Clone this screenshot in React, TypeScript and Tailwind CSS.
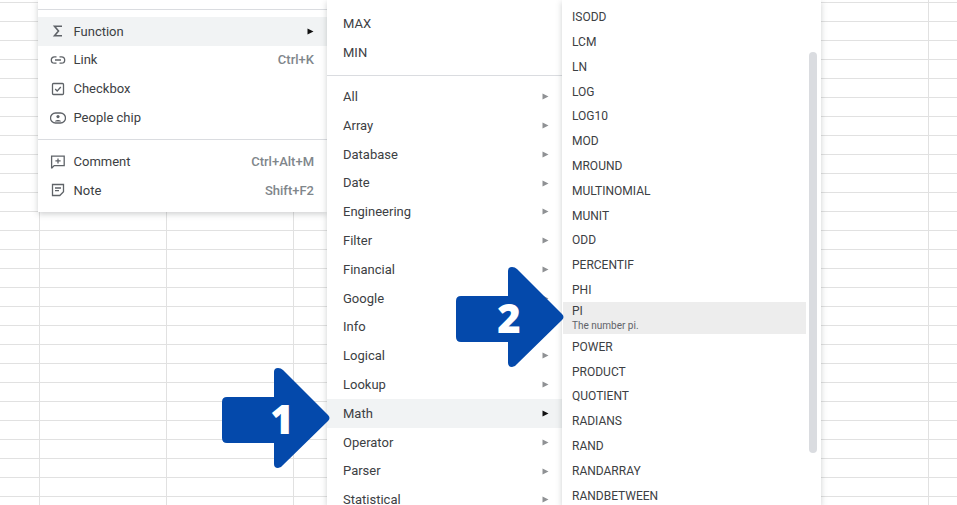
import { ReactNode } from 'react';

const categories = ['All', 'Array', 'Database', 'Date', 'Engineering', 'Filter', 'Financial', 'Google', 'Info', 'Logical', 'Lookup', 'Math', 'Operator', 'Parser', 'Statistical'];
const beforePi = ['ISODD', 'LCM', 'LN', 'LOG', 'LOG10', 'MOD', 'MROUND', 'MULTINOMIAL', 'MUNIT', 'ODD', 'PERCENTIF', 'PHI'];
const afterPi = ['POWER', 'PRODUCT', 'QUOTIENT', 'RADIANS', 'RAND', 'RANDARRAY', 'RANDBETWEEN'];

function Caret({ dark }: { dark?: boolean }) {
  return (
    <svg width="7" height="7" viewBox="0 0 7 7" className="shrink-0">
      <path d="M0.5 0.5 L6.5 3.5 L0.5 6.5 Z" fill={dark ? '#111' : '#8f9194'} />
    </svg>
  );
}

function IconRow({ icon, label, shortcut, active }: { icon: ReactNode; label: string; shortcut?: string; active?: boolean }) {
  return (
    <div className={`flex h-[28.8px] items-center pl-[12px] pr-[13px] ${active ? 'bg-[#f1f3f4]' : ''}`}>
      <span className="flex w-[23.5px] shrink-0 justify-start text-[#5f6368]">{icon}</span>
      <span className="text-[13px] text-[#3c4043]">{label}</span>
      <span className="ml-auto text-[13px] font-medium text-[#80868b]">{shortcut}</span>
      {active && <Caret dark />}
    </div>
  );
}

function Sigma() {
  return (
    <svg width="16" height="16" viewBox="0 0 16 16" fill="none" stroke="currentColor" strokeWidth="1.6">
      <path d="M12 3.2 H4.5 L8.5 8 L4.5 12.8 H12" />
    </svg>
  );
}

function LinkIcon() {
  return (
    <svg width="16" height="16" viewBox="0 0 16 16" fill="none" stroke="currentColor" strokeWidth="1.3">
      <path d="M6.5 4.8 H4.5 a3.2 3.2 0 0 0 0 6.4 H6.5 M9.5 4.8 H11.5 a3.2 3.2 0 0 1 0 6.4 H9.5 M5 8 H11" />
    </svg>
  );
}

function CheckIcon() {
  return (
    <svg width="16" height="16" viewBox="0 0 16 16" fill="none" stroke="currentColor" strokeWidth="1.3">
      <rect x="2.5" y="2.5" width="11" height="11" rx="1" />
      <path d="M5.2 8 L7.2 10 L10.8 6" />
    </svg>
  );
}

function ChipIcon() {
  return (
    <svg width="16" height="16" viewBox="0 0 16 16" fill="none" stroke="currentColor" strokeWidth="1.3">
      <rect x="0.5" y="3" width="15" height="10" rx="5" />
      <circle cx="8" cy="6.6" r="1.6" fill="currentColor" stroke="none" />
      <path d="M4.8 11.4 C5.5 9.4 10.5 9.4 11.2 11.4 Z" fill="currentColor" stroke="none" />
    </svg>
  );
}

function CommentIcon() {
  return (
    <svg width="16" height="16" viewBox="0 0 16 16" fill="none" stroke="currentColor" strokeWidth="1.3">
      <path d="M1.6 14.6 V2.2 H14.2 V11.6 H4.2 L1.6 14.2" />
      <path d="M8 4.4 V9.4 M5.4 6.9 H10.6" />
    </svg>
  );
}

function NoteIcon() {
  return (
    <svg width="16" height="16" viewBox="0 0 16 16" fill="none" stroke="currentColor" strokeWidth="1.3">
      <path d="M2.5 2.5 H13.5 V9.8 L9.8 13.5 H2.5 Z" />
      <path d="M5 6 H11 M5 8.6 H9" />
    </svg>
  );
}

function Arrow({ n, textX }: { n: string; textX: number }) {
  return (
    <svg width="108" height="102" viewBox="0 0 108 102">
      <path
        d="M52 5 Q52 1 56 1 Q59 1 61 3 L106 48 Q109 51 106 54 L61 98 Q59 101 56 101 Q52 101 52 97 L52 76 L5 76 Q0 76 0 71 L0 35 Q0 30 5 30 L52 30 Z"
        fill="#0449ab"
      />
      <text x={textX} y="67" textAnchor="middle" fontFamily="'Open Sans', sans-serif" fontWeight="800" fontSize="40" fill="#fff">
        {n}
      </text>
    </svg>
  );
}

export default function App() {
  return (
    <div className="relative h-[505px] w-[957px] overflow-hidden bg-white bg-[linear-gradient(#e1e1e1_1px,transparent_1px),linear-gradient(90deg,#e1e1e1_1px,transparent_1px)] bg-[size:127px_19px] bg-[position:39px_2px] font-['Roboto',sans-serif]">
      <div className="flex items-start pl-[38px]">
        <div className="z-10 w-[289px] bg-white pb-[7px] shadow-[0_2px_6px_rgba(60,64,67,0.25)]">
          <div className="mt-[9px] mb-[7px] border-t border-[#dadce0]" />
          <IconRow icon={<Sigma />} label="Function" active />
          <IconRow icon={<LinkIcon />} label="Link" shortcut="Ctrl+K" />
          <IconRow icon={<CheckIcon />} label="Checkbox" />
          <IconRow icon={<ChipIcon />} label="People chip" />
          <div className="my-[7px] border-t border-[#dadce0]" />
          <IconRow icon={<CommentIcon />} label="Comment" shortcut="Ctrl+Alt+M" />
          <IconRow icon={<NoteIcon />} label="Note" shortcut="Shift+F2" />
        </div>

        <div className="z-20 h-[505px] w-[235px] overflow-hidden bg-white pt-[9px] shadow-[0_2px_6px_rgba(60,64,67,0.25)]">
          <div className="flex h-[29px] items-center pl-4 text-[13px] text-[#3c4043]">MAX</div>
          <div className="flex h-[29px] items-center pl-4 text-[13px] text-[#3c4043]">MIN</div>
          <div className="mt-[8px] mb-[6.4px] border-t border-[#dadce0]" />
          {categories.map((c) => (
            <div key={c} className={`flex h-[28.8px] items-center justify-between pl-4 pr-[13px] text-[13px] text-[#3c4043] ${c === 'Math' ? 'bg-[#f1f3f4]' : ''}`}>
              <span>{c}</span>
              <Caret dark={c === 'Math'} />
            </div>
          ))}
        </div>

        <div className="relative z-30 h-[505px] w-[259px] overflow-hidden bg-white pt-[4.8px] pl-[1px] shadow-[0_2px_6px_rgba(60,64,67,0.25)]">
          {beforePi.map((f) => (
            <div key={f} className="flex h-[24.8px] w-[243px] items-center pl-[9px] text-[12px] text-[#3c4043]">{f}</div>
          ))}
          <div className="flex h-[32px] w-[243px] flex-col justify-center bg-[#ededed] pb-[1px] pl-[9px] leading-none">
            <span className="text-[12px] text-[#3c4043]">PI</span>
            <span className="mt-[4px] text-[10px] text-[#5f6368]">The number pi.</span>
          </div>
          {afterPi.map((f) => (
            <div key={f} className="flex h-[24.8px] w-[243px] items-center pl-[9px] text-[12px] text-[#3c4043]">{f}</div>
          ))}
          <div className="absolute top-[52px] left-[247px] h-[401px] w-2 rounded-full bg-[#dadce0]" />
        </div>
      </div>

      <div className="absolute top-[367px] left-[222px] z-40">
        <Arrow n="1" textX={60} />
      </div>
      <div className="absolute top-[266px] left-[456px] z-40">
        <Arrow n="2" textX={53} />
      </div>
    </div>
  );
}
